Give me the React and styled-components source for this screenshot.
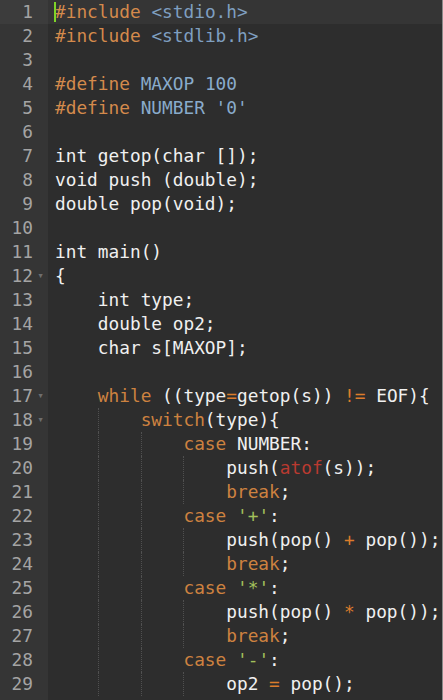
import React from 'react';
import styled, { createGlobalStyle } from 'styled-components';

const Global = createGlobalStyle`
    html, body {
        margin: 0;
        padding: 0;
        background: #2d2d2d;
    }
`;

// indent = number of 4-space levels, t = [kind, text] pairs
const lines = [
    { indent: 0, t: [['pre', '#include'], ['txt', ' '], ['hdr', '<stdio.h>']] },
    { indent: 0, t: [['pre', '#include'], ['txt', ' '], ['hdr', '<stdlib.h>']] },
    { indent: 0, t: [] },
    { indent: 0, t: [['pre', '#define'], ['txt', ' '], ['con', 'MAXOP 100']] },
    { indent: 0, t: [['pre', '#define'], ['txt', ' '], ['con', "NUMBER '0'"]] },
    { indent: 0, t: [] },
    { indent: 0, t: [['txt', 'int getop(char []);']] },
    { indent: 0, t: [['txt', 'void push (double);']] },
    { indent: 0, t: [['txt', 'double pop(void);']] },
    { indent: 0, t: [] },
    { indent: 0, t: [['txt', 'int main()']] },
    { indent: 0, fold: true, t: [['txt', '{']] },
    { indent: 1, t: [['txt', 'int type;']] },
    { indent: 1, t: [['txt', 'double op2;']] },
    { indent: 1, t: [['txt', 'char s[MAXOP];']] },
    { indent: 0, t: [] },
    { indent: 1, fold: true, t: [['kw', 'while'], ['txt', ' ((type'], ['op', '='], ['txt', 'getop(s)) '], ['op', '!='], ['txt', ' EOF){']] },
    { indent: 2, fold: true, t: [['kw', 'switch'], ['txt', '(type){']] },
    { indent: 3, t: [['kw', 'case'], ['txt', ' NUMBER:']] },
    { indent: 4, t: [['txt', 'push('], ['fn', 'atof'], ['txt', '(s));']] },
    { indent: 4, t: [['kw', 'break'], ['txt', ';']] },
    { indent: 3, t: [['kw', 'case'], ['txt', ' '], ['str', "'+'"], ['txt', ':']] },
    { indent: 4, t: [['txt', 'push(pop() '], ['op', '+'], ['txt', ' pop());']] },
    { indent: 4, t: [['kw', 'break'], ['txt', ';']] },
    { indent: 3, t: [['kw', 'case'], ['txt', ' '], ['str', "'*'"], ['txt', ':']] },
    { indent: 4, t: [['txt', 'push(pop() '], ['op', '*'], ['txt', ' pop());']] },
    { indent: 4, t: [['kw', 'break'], ['txt', ';']] },
    { indent: 3, t: [['kw', 'case'], ['txt', ' '], ['str', "'-'"], ['txt', ':']] },
    { indent: 4, t: [['txt', 'op2 '], ['op', '='], ['txt', ' pop();']] },
];

const colors = {
    txt: '#f0f0f0',
    pre: '#d48a4c',
    hdr: '#7f9fc0',
    con: '#89abcb',
    kw: '#cd8240',
    op: '#dc7c2c',
    fn: '#b93a30',
    str: '#a3c15b',
};

const Editor = styled.div`
    display: flex;
    width: 442px;
    height: 700px;
    overflow: hidden;
    background: #2d2d2d;
    border-right: 1px solid #8a8a8a;
    font-family: "DejaVu Sans Mono", "Liberation Mono", monospace;
    font-size: 17.8px;
`;

const Gutter = styled.div`
    flex: 0 0 48px;
    background: #353535;
    color: #a4a4a4;
`;

const GutterRow = styled.div`
    display: grid;
    grid-template-columns: 1fr 15px;
    align-items: center;
    height: 24px;
    line-height: 24px;
    background: ${p => (p.active ? '#3c3c3c' : 'transparent')};
`;

const Num = styled.span`
    text-align: right;
`;

const Fold = styled.span`
    font-size: 7px;
    line-height: 24px;
    color: #6e6e6e;
    text-align: center;
`;

const Code = styled.div`
    flex: 1;
    min-width: 0;
`;

const Line = styled.div`
    position: relative;
    display: flex;
    height: 24px;
    line-height: 24px;
    padding-left: 7px;
    white-space: pre;
    background: ${p => (p.active ? '#353535' : 'transparent')};
`;

const Indent = styled.span`
    flex: 0 0 4ch;
    height: 24px;
    box-sizing: border-box;
    border-left: 1px dotted ${p => (p.guide ? '#505050' : 'transparent')};
`;

const Tok = styled.span`
    color: ${p => colors[p.kind]};
`;

const Cursor = styled.span`
    position: absolute;
    left: 6px;
    top: 2px;
    width: 2px;
    height: 20px;
    background: #7fd428;
`;

const App = () => {
    return (
        <>
            <Global />
            <Editor>
                <Gutter>
                    {lines.map((l, i) => (
                        <GutterRow key={i} active={i === 0}>
                            <Num>{i + 1}</Num>
                            <Fold>{l.fold ? '▼' : ''}</Fold>
                        </GutterRow>
                    ))}
                </Gutter>
                <Code>
                    {lines.map((l, i) => (
                        <Line key={i} active={i === 0}>
                            {i === 0 && <Cursor />}
                            {Array.from({ length: l.indent }).map((_, k) => (
                                <Indent key={k} guide={k > 0} />
                            ))}
                            <span>
                                {l.t.map(([kind, text], j) => (
                                    <Tok key={j} kind={kind}>{text}</Tok>
                                ))}
                            </span>
                        </Line>
                    ))}
                </Code>
            </Editor>
        </>
    );
};

export default App;
